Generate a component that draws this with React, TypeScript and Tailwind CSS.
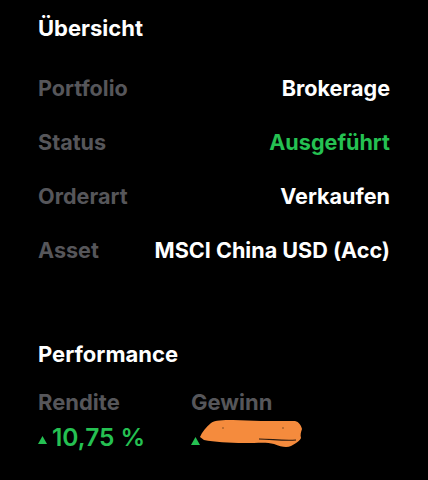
import React from "react";

const rows = [
  { label: "Portfolio", value: "Brokerage", green: false },
  { label: "Status", value: "Ausgeführt", green: true },
  { label: "Orderart", value: "Verkaufen", green: false },
  { label: "Asset", value: "MSCI China USD (Acc)", green: false },
];

function Tri() {
  return (
    <svg width="9" height="8" viewBox="0 0 9 8" className="shrink-0">
      <polygon points="4.5,0 9,8 0,8" fill="#25c152" />
    </svg>
  );
}

export default function App() {
  return (
    <div
      className="w-[428px] h-[480px] bg-black text-white overflow-hidden pl-[38px] pr-[38px]"
      style={{ fontFamily: "Inter, 'Noto Sans', sans-serif" }}
    >
      <h2 className="pt-[15px] text-[22px] font-bold leading-[26px]">Übersicht</h2>
      <div className="mt-[34px] flex flex-col gap-[28px]">
        {rows.map((r) => (
          <div key={r.label} className="flex justify-between items-center h-[26px] text-[21.6px] font-bold">
            <span className="text-[#56565a]">{r.label}</span>
            <span className={r.green ? "text-[#25c152]" : "text-white"}>{r.value}</span>
          </div>
        ))}
      </div>
      <h2 className="mt-[78px] text-[22px] font-bold leading-[26px]">Performance</h2>
      <div className="mt-[22px] flex">
        <div className="w-[153px] flex flex-col">
          <span className="text-[22px] font-bold text-[#56565a] leading-[26px]">Rendite</span>
          <div className="mt-[8px] flex items-center gap-[5px]">
            <span className="mt-[6px]"><Tri /></span>
            <span className="text-[24.5px] font-semibold text-[#25c152] leading-[28px]">10,75 %</span>
          </div>
        </div>
        <div className="flex flex-col">
          <span className="text-[22px] font-bold text-[#56565a] leading-[26px]">Gewinn</span>
          <div className="mt-[8px] relative h-[28px] w-[120px]">
            <span className="absolute left-0 top-[14px]"><Tri /></span>
            <svg width="110" height="30" viewBox="0 0 110 30" className="absolute left-[8px] top-[-4px]">
              <path
                d="M1 18 C3 13 7 8 12 4 C16 1 24 1 34 1 L62 2 L96 2 C100 3 102 6 103 10 C102 13 101 16 102 19 C101 22 97 24 92 27 C88 29 82 28 75 25 C68 23 60 24 45 24 C30 24 15 23 5 21 Z"
                fill="#f58b3d"
              />
              <path d="M60 20 C72 20 84 22 97 21" stroke="#2a1a10" strokeWidth="1.2" fill="none" />
              <circle cx="24" cy="9" r="0.8" fill="#7a4a20" />
              <circle cx="84" cy="9" r="0.8" fill="#7a4a20" />
            </svg>
          </div>
        </div>
      </div>
    </div>
  );
}
